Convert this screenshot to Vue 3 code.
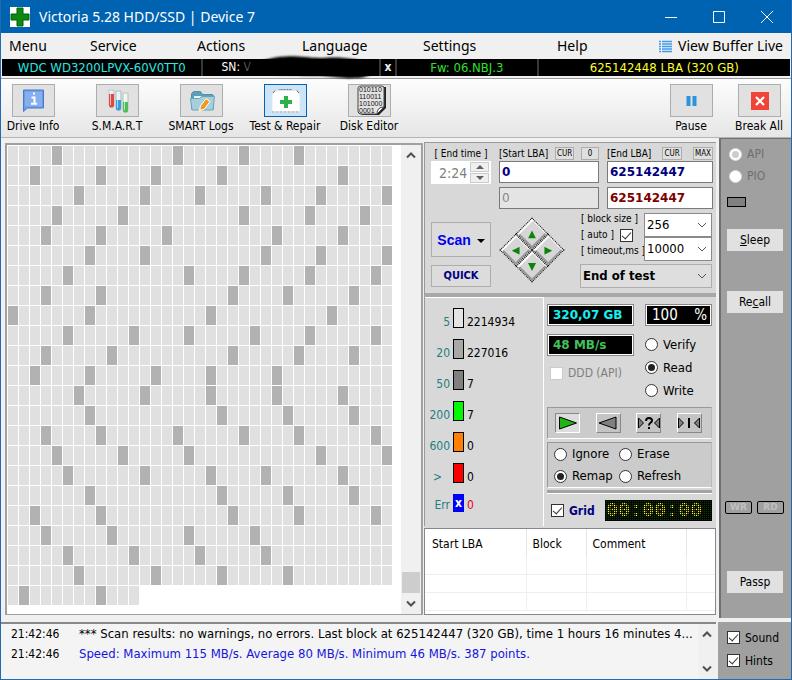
<script setup>
import { ref } from 'vue'

const menu = ['Menu', 'Service', 'Actions', 'Language', 'Settings', 'Help']

const columns = 35
const slowCells = [
  [4, 15, 21, 26],
  [2, 8, 13, 19, 30],
  [6, 12, 17, 23, 28, 34],
  [4, 10, 21, 27, 32],
  [3, 8, 14, 24, 30],
  [7, 12, 23, 28, 34],
  [5, 16, 21, 27, 33],
  [3, 8, 20, 25, 31],
  [0, 7, 18, 29],
  [5, 11, 16, 22, 27, 33],
  [3, 9, 20, 26, 31],
  [2, 7, 13, 18, 24],
  [6, 12, 18, 24, 30],
  [7, 19, 25, 31],
  [3, 8, 15, 21, 26, 33],
  [4, 10, 16, 28, 34],
  [5, 12, 18, 23, 30],
  [7, 19, 25, 31],
  [2, 8, 20, 26, 33],
  [3, 9, 16, 22],
  [5, 11, 17, 23],
  [6, 13, 19, 25],
  [1, 8],
]
const cells = slowCells.flatMap((slow, row) =>
  Array.from({ length: row === slowCells.length - 1 ? 12 : columns }, (_, c) => slow.includes(c)),
)

const legend = [
  { label: '5', count: '2214934', tone: 'fast' },
  { label: '20', count: '227016', tone: 'light' },
  { label: '50', count: '7', tone: 'mid' },
  { label: '200', count: '7', tone: 'green' },
  { label: '600', count: '0', tone: 'orange' },
  { label: '>', count: '0', tone: 'red' },
  { label: 'Err', count: '0', tone: 'err' },
]

const startLba = ref('0')
const endLba = ref('625142447')
const curStart = ref('0')
const curEnd = ref('625142447')
const endTime = ref('2:24')
const auto = ref(true)
const ddd = ref(false)
const grid = ref(true)
const sound = ref(true)
const hints = ref(true)
const mode = ref('Read')
const action = ref('Remap')
const access = ref('API')
</script>

<template>
  <div class="window">
    <header class="title">
      <svg class="logo" viewBox="0 0 20 20"><rect width="20" height="20" fill="#fff" /><path d="M7 1h6v6h6v6h-6v6H7v-6H1V7h6z" fill="#0a8a10" stroke="#045c08" /></svg>
      <h1>Victoria 5.28 HDD/SSD | Device 7</h1>
      <div class="winbtns">
        <button aria-label="Minimize"><svg viewBox="0 0 14 14"><path d="M1 7.5h12" /></svg></button>
        <button aria-label="Maximize"><svg viewBox="0 0 14 14"><path d="M1.5 1.5h11v11h-11z" /></svg></button>
        <button aria-label="Close"><svg viewBox="0 0 14 14"><path d="M1 1l12 12M13 1L1 13" /></svg></button>
      </div>
    </header>

    <nav class="menu">
      <button v-for="m in menu" :key="m">{{ m }}</button>
      <button class="live">
        <svg viewBox="0 0 13 13"><path d="M0 1.5h2M0 4h2M0 6.5h2M0 9h2M0 11.5h2M3 1.5h10M3 4h10M3 6.5h10M3 9h10M3 11.5h10" stroke="#3f9bea" stroke-width="1.3" /></svg>
        View Buffer Live
      </button>
    </nav>

    <div class="device">
      <span class="model">WDC WD3200LPVX-60V0TT0</span>
      <span class="serial">SN: <i>V</i>
        <svg class="smudge" viewBox="0 0 136 28"><path d="M4 9C14 7 22 2 40 1.500S66 4 84 3s34 2 44 5 8 8 4 12-12 5-22 5-24-3-40-3S26 21 12 19 0 11 4 9z" /></svg>
      </span>
      <button class="clear">x</button>
      <span class="fw">Fw: 06.NBJ.3</span>
      <span class="lba">625142448 LBA (320 GB)</span>
    </div>

    <div class="toolbar">
      <button class="tool">
        <span class="face"><svg viewBox="0 0 41 31"><path d="M10.500 5h20v18h-16l-4 3.500z" fill="#6b9ae6" stroke="#4a78c8" /><path d="M12 6.500h17v15H12z" fill="#86aff0" /><path d="M18.500 12.500h3v6M18 18.800h6M20 8.500h2" stroke="#fff" stroke-width="2" fill="none" /></svg></span>
        Drive Info
      </button>
      <button class="tool">
        <span class="face"><svg viewBox="0 0 41 31">
          <path d="M12 5h5v15a2.500 2.500 0 0 1-5 0z" fill="#e9eef2" stroke="#b9c4cc" /><path d="M12 9h5v11a2.500 2.500 0 0 1-5 0z" fill="#dc4a42" />
          <path d="M19 6h5v17a2.500 2.500 0 0 1-5 0z" fill="#e9f2f8" stroke="#a9bac6" /><path d="M19 15h5v8a2.500 2.500 0 0 1-5 0z" fill="#3b9be0" />
          <path d="M26 8h5v17a2.500 2.500 0 0 1-5 0z" fill="#edf5ec" stroke="#b4c4b4" /><path d="M26 17h5v8a2.500 2.500 0 0 1-5 0z" fill="#4dbd58" />
          <path d="M13.500 6v14M20.500 7v16M27.500 9v16" stroke="#fff" opacity=".6" />
        </svg></span>
        S.M.A.R.T
      </button>
      <button class="tool">
        <span class="face"><svg viewBox="0 0 41 31"><path d="M10.500 24V8.500l2-2h7l2 3h10l1 1V24z" fill="#5ba0b8" stroke="#5592a8" /><path d="M13 11h17v9H13z" fill="#e6f2f5" /><path d="M9.500 13.500h9l2-2h13L32 25H11z" fill="#a6cfdd" stroke="#6aa4b8" /><path d="M18 26l1.500-5 5.500-7.500 4 3-5.500 7.500z" fill="#f39a1e" stroke="#fff" /><path d="M18 26l1-3 2 1.500z" fill="#fbe3bb" /></svg></span>
        SMART Logs
      </button>
      <button class="tool active">
        <span class="face"><svg viewBox="0 0 41 31"><path d="M14 6V4.500h13V6" stroke="#777" fill="none" stroke-dasharray="2 1" /><path d="M7 10l2-4.500h24l2 4.500v15.500q0 1-1 1H8q-1 0-1-1z" fill="#fff" stroke="#e2e6ea" /><path d="M8 8l2-2.500M34 8l-2-2.500" stroke="#666" /><path d="M7 27h28" stroke="#aaa" stroke-dasharray="2 2" /><path d="M19 11h4v4h4v4h-4v4h-4v-4h-4v-4h4z" fill="#2eb14b" /></svg></span>
        Test &amp; Repair
      </button>
      <button class="tool">
        <span class="face"><svg viewBox="0 0 41 31"><path d="M11 2h26v21l-7 7H15q-5 0-5-5V4z" fill="#222" /><path d="M9 2.500q1-1.500 3-1.500h21q2 0 2 2v19l-7 7H12q-3 0-3-3z" fill="#e4e4e4" stroke="#444" /><path d="M28 29q0-7 7-7z" fill="#fff" stroke="#444" /><g font-family="Liberation Sans" font-size="7" fill="#111"><text x="10" y="7">010110</text><text x="10" y="14">110011</text><text x="10" y="21">101000</text><text x="10" y="28">0001</text></g></svg></span>
        Disk Editor
      </button>
      <div class="right-tools">
        <button class="tool">
          <span class="face"><svg viewBox="0 0 41 31"><path d="M15.500 11h4v10h-4zM21.500 11h4v10h-4z" fill="#2d93dd" /></svg></span>
          Pause
        </button>
        <button class="tool">
          <span class="face"><svg viewBox="0 0 41 31"><path d="M12 7h18v18H12z" fill="#f04438" /><path d="M17 12l8 8M25 12l-8 8" stroke="#fff" stroke-width="2.200" /></svg></span>
          Break All
        </button>
      </div>
    </div>

    <main class="main">
      <section class="map">
        <div class="cells">
          <span v-for="(slow, i) in cells" :key="i" :class="{ slow }"></span>
        </div>
        <div class="scroll">
          <svg viewBox="0 0 10 7"><path d="M1 5.500l4-4 4 4" /></svg>
          <span class="thumb"></span>
          <svg viewBox="0 0 10 7"><path d="M1 1.500l4 4 4-4" /></svg>
        </div>
      </section>

      <section class="controls">
        <div class="setup">
          <div class="ranges">
            <div class="col">
              <label class="head center" for="endtime">[ End time ]</label>
              <div class="spin">
                <input id="endtime" v-model="endTime" disabled />
                <div class="steps">
                  <button disabled aria-label="Increase"><svg viewBox="0 0 8 4"><path d="M0 4l4-4 4 4z" /></svg></button>
                  <button disabled aria-label="Decrease"><svg viewBox="0 0 8 4"><path d="M0 0l4 4 4-4z" /></svg></button>
                </div>
              </div>
            </div>
            <div class="col">
              <div class="head"><label for="start">[Start LBA]</label><button>CUR</button><button>0</button></div>
              <input id="start" v-model="startLba" class="num" />
              <input v-model="curStart" class="num off" aria-label="Current start LBA" disabled />
            </div>
            <div class="col">
              <div class="head"><label for="end">[End LBA]</label><button>CUR</button><button>MAX</button></div>
              <input id="end" v-model="endLba" class="num" />
              <input v-model="curEnd" class="num red" aria-label="Current end LBA" />
            </div>
          </div>

          <div class="run">
            <div class="launch">
              <button class="scan">Scan <svg viewBox="0 0 8 4"><path d="M0 0l4 4 4-4z" /></svg></button>
              <button class="quick">QUICK</button>
            </div>
            <div class="pad-wrap">
              <div class="pad">
                <button aria-label="Up"><svg viewBox="0 0 8 8"><path d="M0 8L4 0l4 8z" /></svg></button>
                <button aria-label="Right"><svg viewBox="0 0 8 8"><path d="M0 0l8 4-8 4z" /></svg></button>
                <button aria-label="Left"><svg viewBox="0 0 8 8"><path d="M8 0L0 4l8 4z" /></svg></button>
                <button aria-label="Down"><svg viewBox="0 0 8 8"><path d="M0 0l4 8 4-8z" /></svg></button>
              </div>
            </div>
            <div class="options">
              <div class="opt-labels">
                <label for="block">[ block size ]</label>
                <label>[ auto ] <input v-model="auto" type="checkbox" class="check" /></label>
                <label for="timeout">[ timeout,ms ]</label>
              </div>
              <div class="opt-selects">
                <span class="select"><select id="block"><option>256</option></select><svg viewBox="0 0 10 6"><path d="M1 1l4 4 4-4" /></svg></span>
                <span class="select"><select id="timeout"><option>10000</option></select><svg viewBox="0 0 10 6"><path d="M1 1l4 4 4-4" /></svg></span>
              </div>
              <span class="select end"><select aria-label="After test"><option>End of test</option></select><svg viewBox="0 0 10 6"><path d="M1 1l4 4 4-4" /></svg></span>
            </div>
          </div>
        </div>

        <div class="stats">
          <ul class="legend">
            <li v-for="l in legend" :key="l.label" :class="l.tone">
              <span class="ms">{{ l.label }}</span>
              <span class="swatch">{{ l.tone === 'err' ? 'x' : '' }}</span>
              <span>{{ l.count }}</span>
            </li>
          </ul>

          <div class="status">
            <div class="readouts">
              <div class="left">
                <output class="lcd cyan">320,07 GB</output>
                <output class="lcd lime">48 MB/s</output>
                <label class="ddd"><input v-model="ddd" type="checkbox" class="check" disabled /> DDD (API)</label>
              </div>
              <div class="modes">
                <output class="lcd pct"><span>100</span><span>%</span></output>
                <label v-for="m in ['Verify', 'Read', 'Write']" :key="m"><input v-model="mode" type="radio" name="mode" :value="m" /> {{ m }}</label>
              </div>
            </div>

            <div class="group play">
              <button class="on" aria-label="Forward"><svg viewBox="0 0 22 14"><path d="M2.500 1l17 6-17 6z" fill="#1fb514" stroke="#000" /></svg></button>
              <button aria-label="Backward"><svg viewBox="0 0 22 14"><path d="M19 1L2 7l17 6z" fill="#808080" stroke="#000" /></svg></button>
              <button aria-label="Random"><svg viewBox="0 0 22 14"><path d="M.5 2l5 5-5 5zM21.500 2l-5 5 5 5z" fill="#808080" stroke="#000" /><path d="M8 5q0-3 3-3t3 2.500q0 1.500-1.800 2.500Q11 7.800 11 9.500M11 11v2" fill="none" stroke="#000" stroke-width="2" /></svg></button>
              <button aria-label="Butterfly"><svg viewBox="0 0 22 14"><path d="M.5 2l5 5-5 5zM21.500 2l-5 5 5 5z" fill="#808080" stroke="#000" /><path d="M11 2v10" stroke="#000" stroke-width="2" /></svg></button>
            </div>

            <div class="group actions">
              <label v-for="a in ['Ignore', 'Erase', 'Remap', 'Refresh']" :key="a"><input v-model="action" type="radio" name="action" :value="a" /> {{ a }}</label>
            </div>
            <div class="gauge"></div>

            <div class="gridrow">
              <label><input v-model="grid" type="checkbox" class="check" /> Grid</label>
              <time class="clock">00:00:00</time>
            </div>
          </div>
        </div>

        <div class="defects">
          <table>
            <thead><tr><th>Start LBA</th><th>Block</th><th>Comment</th><th></th></tr></thead>
            <tbody><tr v-for="n in 3" :key="n"><td></td><td></td><td></td><td></td></tr></tbody>
          </table>
        </div>
      </section>

      <aside class="side">
        <label v-for="a in ['API', 'PIO']" :key="a" class="access"><input v-model="access" type="radio" name="access" :value="a" disabled /> {{ a }}</label>
        <span class="led"></span>
        <button class="cmd sleep"><u>S</u>leep</button>
        <button class="cmd recall">Re<u>c</u>all</button>
        <div class="wrrd"><span>WR</span><span>RD</span></div>
        <button class="cmd">Passp</button>
      </aside>
    </main>

    <footer class="foot">
      <div class="log">
        <div class="lines">
          <p><time>21:42:46</time><span>*** Scan results: no warnings, no errors. Last block at 625142447 (320 GB), time 1 hours 16 minutes 4...</span></p>
          <p><time>21:42:46</time><span class="blue">Speed: Maximum 115 MB/s. Average 80 MB/s. Minimum 46 MB/s. 387 points.</span></p>
        </div>
        <div class="scroll">
          <svg viewBox="0 0 10 7"><path d="M1 5.500l4-4 4 4" /></svg>
          <svg viewBox="0 0 10 7"><path d="M1 1.500l4 4 4-4" /></svg>
        </div>
      </div>
      <div class="prefs">
        <label><input v-model="sound" type="checkbox" class="check" /> Sound</label>
        <label><input v-model="hints" type="checkbox" class="check" /> Hints</label>
      </div>
    </footer>
  </div>
</template>

<style>
body { background: #f0f0f0; }
</style>

<style scoped>
* { box-sizing: border-box; }
.window {
  display: flex;
  flex-direction: column;
  min-height: 100vh;
  border: 1px solid #1f6db0;
  border-top: 0;
  background: #f0f0f0;
  color: #000;
  font: 12px/16px "DejaVu Sans Condensed", "Noto Sans", sans-serif;
}
button, input, select { font: inherit; color: inherit; margin: 0; padding: 0; border-radius: 0; }
button { border: 0; background: none; white-space: nowrap; }
label { white-space: nowrap; }
h1, p, ul { margin: 0; padding: 0; }

.title { display: flex; align-items: center; height: 33px; padding-left: 9px; background: #0063b1; color: #fff; }
.logo { width: 20px; height: 20px; }
h1 { flex: 1; padding-left: 9px; font: 14px/20px "Noto Sans", sans-serif; }
.winbtns { display: flex; }
.winbtns button { width: 48px; height: 33px; display: flex; align-items: center; justify-content: center; }
.winbtns svg { width: 14px; height: 14px; fill: none; stroke: #fff; }

.menu { display: grid; grid-template-columns: 81fr 107fr 105fr 121fr 134fr 102fr 132fr; height: 26px; padding-left: 8px; font: 14px/24px "Noto Sans", sans-serif; }
.menu button { text-align: left; }
.menu .live { display: flex; align-items: center; gap: 6px; }
.live svg { width: 13px; height: 13px; flex: none; }

.device { display: grid; grid-template-columns: 200fr 176fr 14fr 140fr 252fr; gap: 2px; margin: 0 1px; height: 17px; background: #383838; font-size: 13px; line-height: 17px; text-align: center; }
.device > * { background: #000; }
.model { color: #2ee6e0; }
.serial { position: relative; z-index: 1; color: #fff; font-size: 12px; text-align: left; padding-left: 18px; }
.serial i { color: #555; font-style: normal; }
.smudge { position: absolute; left: 44px; top: -4px; width: 130px; height: 26px; filter: blur(1px); }
.clear { color: #eee; font-size: 12px; font-weight: bold; }
.fw { color: #2fe02f; }
.lba { color: #ffff2a; }

.toolbar { display: flex; gap: 20px; height: 60px; margin-top: 2px; padding-top: 5px; border-top: 1px solid #999; border-bottom: 1px solid #b5b5b5; background: linear-gradient(#fdfdfd, #e6e6e6); }
.tool { display: flex; flex-direction: column; align-items: center; gap: 1px; width: 64px; }
.face { display: block; width: 43px; height: 33px; border: 1px solid #adadad; background: #e1e1e1; }
.face svg { display: block; width: 41px; height: 31px; }
.active .face { border-color: #0a62ad; background: #cce4f7; }
.right-tools { display: flex; gap: 4px; margin-left: auto; }

.main { display: flex; flex: 1; }
.map { display: flex; flex: 1; margin: 5px 0 3px 4px; border: 2px solid #a0a0a0; border-bottom-width: 1px; background: #fff; }
.cells { flex: 1; display: grid; grid-template-columns: repeat(35, 10px); grid-auto-rows: 19px; gap: 1px; align-content: start; padding: 1px; }
.cells span { background: #e0e0e0; }
.cells .slow { background: #b2b2b2; }
.scroll { display: flex; flex-direction: column; align-items: center; width: 20px; background: #f0f0f0; padding: 7px 0; }
.scroll svg { width: 10px; height: 7px; fill: none; stroke: #505050; stroke-width: 2; }
.thumb { width: 18px; height: 21px; margin-top: auto; margin-bottom: 7px; background: #cdcdcd; }

.controls { display: flex; flex-direction: column; width: 292px; margin: 4px 3px 3px 1px; background: #d8d8d8; }
.setup { padding: 4px 4px 5px 6px; border-top: 1px solid #999; border-left: 1px solid #999; border-bottom: 4px solid #a8a8a8; }
.ranges { display: grid; grid-template-columns: 60px 100px 106px; gap: 8px; }
.col { display: flex; flex-direction: column; gap: 4px; }
.head { display: flex; align-items: center; justify-content: space-between; height: 13px; margin-bottom: -3px; font-size: 10px; }
.center { justify-content: center; }
.head button { min-width: 18px; height: 13px; padding: 0 1px; border: 1px solid #adadad; background: #dfdfdf; font-size: 8px; line-height: 11px; }
.spin { display: flex; justify-content: space-between; height: 23px; padding: 1px 2px; background: #fff; color: #808080; }
.spin input { width: 36px; padding-left: 6px; border: 0; background: none; font-size: 14px; }
.steps { display: grid; width: 19px; gap: 1px; }
.steps button { display: flex; align-items: center; justify-content: center; border: 1px solid #ccc; background: #f0f0f0; }
.steps svg { width: 8px; height: 4px; fill: #606060; }
.num { width: 100%; height: 22px; padding: 0 2px; border: 1px solid #7a7a7a; background: #fff; color: #000080; font: bold 12px/18px "DejaVu Sans", sans-serif; }
.num.off { background: #e4e4e4; color: #888; font-weight: normal; }
.num.red { color: #7d0000; }

.run { display: grid; grid-template-columns: 60px 1fr 132px; margin-top: 3px; }
.launch { display: flex; flex-direction: column; gap: 8px; padding-top: 10px; }
.launch button { border: 1px solid #adadad; background: #dcdcdc; }
.scan { height: 35px; color: #0000f0; font: bold 14px/20px "Liberation Sans", sans-serif; }
.scan svg { width: 8px; height: 4px; margin-left: 2px; vertical-align: 2px; fill: #000; }
.quick { height: 22px; color: #000080; font: bold 11px/16px "DejaVu Sans Condensed", sans-serif; }
.pad-wrap { display: flex; justify-content: center; align-items: center; padding-right: 8px; }
.pad { display: grid; grid-template-columns: 23px 23px; grid-auto-rows: 23px; transform: rotate(45deg); }
.pad button { display: flex; align-items: center; justify-content: center; border: 1px dotted #000; background: #d6d6d6; box-shadow: inset 2px 1px #fff, inset -2px -2px #999; }
.pad svg { width: 8px; height: 8px; fill: #0a850a; transform: rotate(-45deg); }
.options { display: grid; grid-template-columns: 64px 68px; row-gap: 3px; }
.opt-labels { display: flex; flex-direction: column; padding-left: 1px; font-size: 10px; line-height: 14px; gap: 2px; }
.opt-labels label { display: flex; align-items: center; gap: 6px; }
.opt-selects { display: flex; flex-direction: column; padding-top: 1px; }
.select { position: relative; display: flex; height: 24px; }
.select select { appearance: none; width: 100%; border: 1px solid #8a8a8a; background: #fff; padding: 0 2px; font-size: 13px; }
.select svg { position: absolute; right: 5px; top: 9px; width: 10px; height: 6px; fill: none; stroke: #555; pointer-events: none; }
.select.end { grid-column: 1 / -1; }
.end select { border-color: #adadad; background: #dedede; font: bold 13px/20px "DejaVu Sans Condensed", sans-serif; }

.check { appearance: none; position: relative; flex: none; width: 13px; height: 13px; border: 1px solid #333; background: #fff; }
.check:checked::after { content: ""; position: absolute; left: 3px; top: 0; width: 4px; height: 8px; border: solid #333; border-width: 0 1px 1px 0; transform: rotate(42deg); }
.check:disabled { border-color: #ccc; }
input[type="radio"] { appearance: none; flex: none; display: flex; width: 13px; height: 13px; padding: 2px; border: 1px solid #333; border-radius: 50%; background: #fff; }
input[type="radio"]:checked::after { content: ""; flex: 1; border-radius: 50%; background: #222; }

.stats { display: flex; border-left: 1px solid #999; }
.legend { width: 119px; padding: 10px 0 1px; border-top: 1px solid #fff; border-right: 1px solid #fff; list-style: none; }
.legend li { display: flex; gap: 3px; height: 31px; line-height: 28px; }
.ms { width: 25px; color: #1c8080; text-align: right; }
.swatch { width: 11px; height: 20px; border: 1px solid #000; }
.fast .swatch { background: #e4e4e4; }
.light .swatch { background: #a8a8a8; }
.mid .swatch { background: #808080; }
.green .swatch { background: #00f800; }
.orange .swatch { background: #ff8000; }
.red .swatch { background: #f80000; }
.red .ms { padding-right: 8px; }
.legend .err { color: #f00020; line-height: 22px; }
.err .swatch { height: 18px; border: 0; background: #0000f8; color: #fff; font-weight: bold; line-height: 18px; text-align: center; }
.status { flex: 1; min-width: 0; padding: 7px 4px 0 3px; }
.readouts { display: flex; justify-content: space-between; }
.left, .modes { display: flex; flex-direction: column; }
.left { width: 87px; gap: 8px; }
.lcd { display: block; height: 22px; padding-left: 5px; border: 1px solid #888; outline: 1px solid #fff; outline-offset: -2px; background: #000; font: bold 12px/20px "DejaVu Sans", sans-serif; }
.cyan { color: #16f0f0; }
.lime { color: #41c15c; }
.pct { display: flex; justify-content: space-between; width: 67px; margin-bottom: 7px; padding: 0 4px 0 6px; color: #fff; font: 15px/21px "DejaVu Sans Condensed", sans-serif; }
.modes label { display: flex; align-items: center; gap: 5px; height: 23px; font-size: 13px; }
.ddd { display: flex; align-items: center; gap: 5px; padding: 1px 3px; color: #808080; }
.group { border: 1px solid #999; border-right-color: #bbb; border-bottom-color: #fff; background: #cbcbcb; }
.play { display: flex; justify-content: space-between; margin-top: 5px; height: 32px; padding: 5px 9px 5px 7px; }
.play button { width: 25px; height: 20px; border: 1px solid #fff; border-right-color: #888; border-bottom-color: #888; background: #c4c4c4; display: flex; align-items: center; justify-content: center; }
.play .on { border-color: #888 #fff #fff #888; background: #ddd; }
.play svg { width: 22px; height: 14px; }
.actions { display: grid; grid-template-columns: 65px 1fr; margin-top: 3px; padding-left: 6px; }
.actions label { display: flex; align-items: center; gap: 5px; height: 22px; font-size: 13px; }
.gauge { height: 4px; margin: 2px 0; border-bottom: 1px solid #fff; background: #a2a2a2; }
.gridrow { display: flex; align-items: center; justify-content: space-between; padding: 4px 0 4px 4px; }
.gridrow label { display: flex; align-items: center; gap: 5px; color: #000080; font: bold 12px/16px "DejaVu Sans Condensed", sans-serif; }
.clock { position: relative; width: 107px; height: 21px; padding-left: 1px; background: #0c3208; color: #ffff30; font: bold 20px/21px "Liberation Mono", monospace; }
.clock::after { content: ""; position: absolute; inset: 0; background: repeating-linear-gradient(90deg, #000c 0 1px, transparent 1px 2px), repeating-linear-gradient(#000c 0 1px, transparent 1px 2px); }

.defects { flex: 1; margin-top: 2px; border: 1px solid #828790; background: #fff; }
table { width: 100%; table-layout: fixed; border-collapse: collapse; }
th { height: 27px; padding: 2px 0 0 6px; border-right: 1px solid #e5e5e5; text-align: left; font-weight: normal; }
th:first-child { width: 101px; padding-left: 7px; }
th:nth-child(2), td:nth-child(2) { width: 60px; }
th:nth-child(3) { width: 100px; }
th:last-child, td:last-child { border-right: 0; }
td { height: 18px; border-right: 1px solid #efefef; border-bottom: 1px solid #efefef; padding: 0; }

.side { display: flex; flex-direction: column; align-items: flex-start; width: 72px; padding: 4px 8px 25px; border-left: 2px solid #707070; border-top: 1px solid #707070; background: #a0a0a0; }
.access { display: flex; align-items: center; gap: 5px; height: 22px; color: #6f6f6f; }
.access input[type="radio"] { border-color: #ddd; }
.access input[type="radio"]:checked::after { background: #ccc; }
.led { width: 19px; height: 10px; margin: 10px 0 22px -2px; border: 1px solid #000; background: #808080; }
.cmd { width: 56px; height: 22px; margin-left: -2px; background: #e1e1e1; }
.recall { margin-top: 40px; }
.wrrd { display: flex; gap: 5px; margin: auto 0 57px -4px; }
.wrrd span { width: 27px; height: 13px; border: 1px solid #000; border-radius: 2px; color: #c0c0c0; font: bold 9px/11px "DejaVu Sans", sans-serif; text-align: center; }

.foot { display: flex; gap: 2px; height: 57px; margin-top: 4px; }
.log { flex: 1; display: flex; min-width: 0; border-top: 2px solid #888; background: #f4f4f4; }
.lines { flex: 1; min-width: 0; font-size: 13px; }
.lines p { display: flex; align-items: center; height: 20px; white-space: nowrap; }
.lines time { width: 78px; padding-left: 10px; font-size: 12px; }
.blue { color: #1414dc; }
.log .scroll { justify-content: space-between; width: 18px; }
.prefs { width: 73px; padding: 4px 9px; background: #a0a0a0; }
.prefs label { display: flex; align-items: center; gap: 5px; height: 23px; }
</style>
